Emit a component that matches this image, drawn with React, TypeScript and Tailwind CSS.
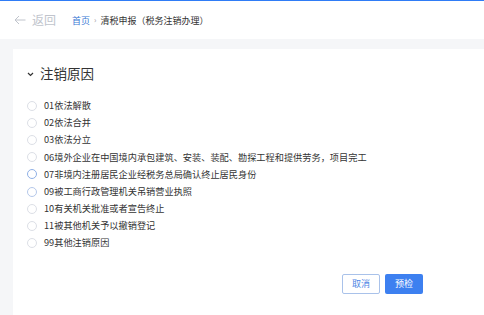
import React from "react";

const items = [
  "01依法解散",
  "02依法合并",
  "03依法分立",
  "06境外企业在中国境内承包建筑、安装、装配、勘探工程和提供劳务，项目完工",
  "07非境内注册居民企业经税务总局确认终止居民身份",
  "09被工商行政管理机关吊销营业执照",
  "10有关机关批准或者宣告终止",
  "11被其他机关予以撤销登记",
  "99其他注销原因",
];

export default function App() {
  return (
    <div
      className="w-[484px] h-[315px] overflow-hidden bg-[#f5f6f8] flex flex-col"
      style={{ fontFamily: '"Noto Sans CJK SC", "Noto Sans", sans-serif' }}
    >
      <div className="h-px bg-[#2f7cf6]" />
      <div className="h-[38px] bg-white flex items-center pl-[14px]">
        <div className="flex items-center text-[#c0c4cc]">
          <svg width="12" height="10" viewBox="0 0 12 10" fill="none" stroke="#c0c4cc" strokeWidth="1">
            <path d="M11.5 5H1M5 1L1 5l4 4" />
          </svg>
          <span className="ml-[6px] text-[12px] leading-none">返回</span>
        </div>
        <div className="ml-[16px] flex items-center text-[9px] leading-none">
          <span className="text-[#3a78d4]">首页</span>
          <span className="mx-[4px] text-[#999] text-[8px]">›</span>
          <span className="text-[#333]">清税申报（税务注销办理）</span>
        </div>
      </div>
      <div className="h-[10px]" />
      <div className="flex-1 ml-[13px] bg-white flex flex-col">
        <div className="flex items-center h-[20px] mt-[15px] pl-[14px]">
          <svg width="7" height="5" viewBox="0 0 7 5" fill="none" stroke="#333" strokeWidth="1.2">
            <path d="M1 1l2.5 2.5L6 1" />
          </svg>
          <span className="ml-[6px] text-[13.5px] text-[#333] leading-none">注销原因</span>
        </div>
        <div className="mt-[13px] flex flex-col">
          {items.map((t, i) => (
            <div key={i} className="flex items-center h-[17.2px] pl-[14px]">
              <span
                className={
                  "w-[10px] h-[10px] rounded-full border bg-white " +
                  (i === 4 ? "border-[#8fb0e6]" : i === 5 ? "border-[#b5c8ea]" : "border-[#dcdfe6]")
                }
              />
              <span className="ml-[7px] text-[9.2px] text-[#333] leading-none">{t}</span>
            </div>
          ))}
        </div>
        <div className="flex justify-end gap-[5px] mt-[22px] pr-[61px]">
          <button className="w-[38px] h-[20px] rounded-[2px] border border-[#a9c2ea] bg-white text-[#4d86e4] text-[9px] leading-none">
            取消
          </button>
          <button className="w-[38px] h-[20px] rounded-[2px] bg-[#3d80f0] text-white text-[9px] leading-none">
            预检
          </button>
        </div>
      </div>
    </div>
  );
}
